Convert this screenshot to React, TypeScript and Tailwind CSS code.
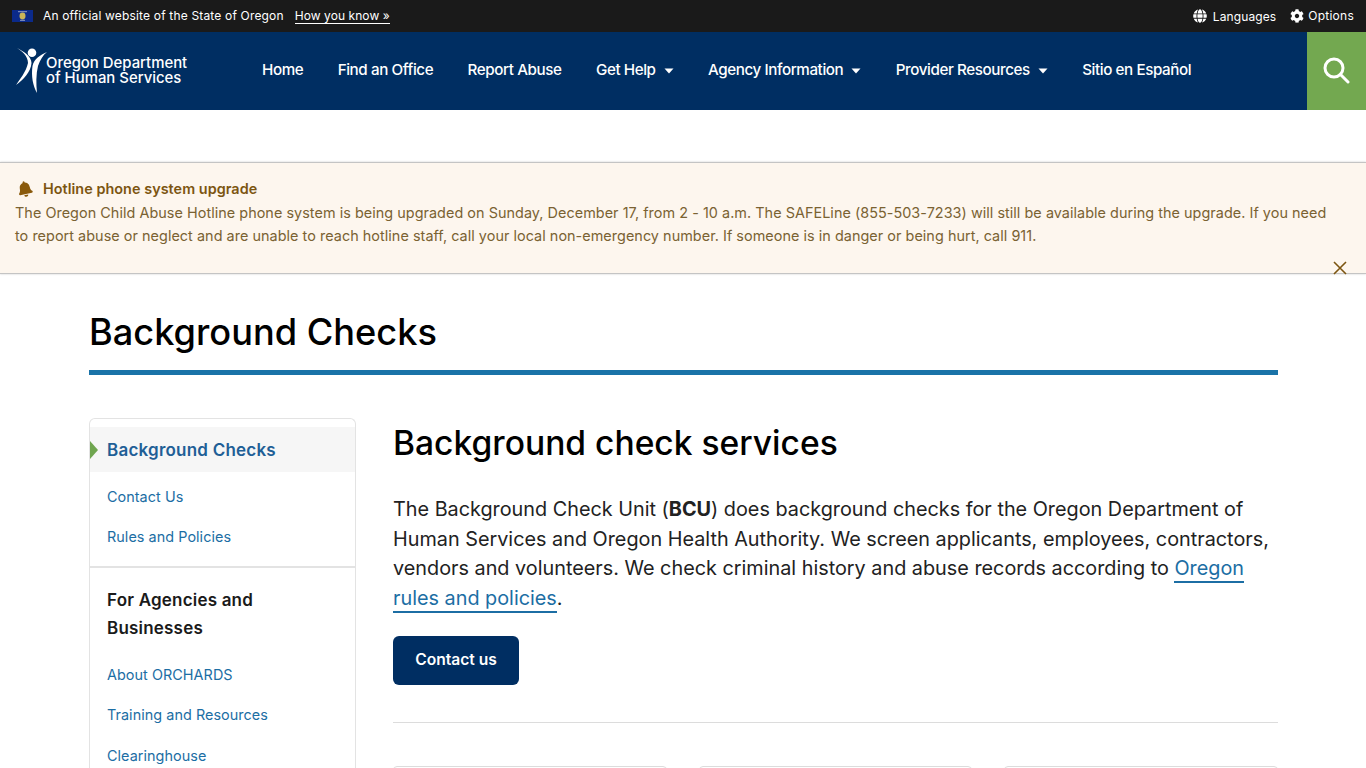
import { FaGlobe, FaCog, FaBell } from "react-icons/fa";

function Flag() {
  return (
    <svg width="21" height="12" viewBox="0 0 21 12" className="block">
      <rect width="21" height="12" fill="#0b2a8a" />
      <ellipse cx="10.5" cy="6" rx="3" ry="3.4" fill="#c9b458" />
      <rect x="6" y="1.2" width="9" height="1" fill="#8f9cc4" />
      <rect x="8" y="9.8" width="5" height="1" fill="#8f9cc4" />
    </svg>
  );
}

function Logo() {
  return (
    <svg width="32" height="50" viewBox="0 0 32 50" className="block overflow-visible">
      <circle cx="17" cy="6.8" r="4.3" fill="#fff" />
      <path d="M2 2 C7 5 13 10 13 17 C11 26 5 33 1 39 C8 34 16 26 16.5 17 C16.5 10 8 5 2 2 Z" fill="#fff" />
      <path d="M32 6 C25 9 19 13 17.5 20 C16 30 18 40 22 47 C21 38 21 28 23 20 C25 14 28 9 32 6 Z" fill="#fff" />
    </svg>
  );
}

function NavItem({ label, caret }: { label: string; caret?: boolean }) {
  return (
    <span className="flex items-center gap-[8px] text-white text-[15.2px] leading-none font-medium tracking-[-0.41px]">
      {label}
      {caret && (
        <svg width="10" height="6" viewBox="0 0 10 6" className="block mt-[2px]">
          <path d="M0.5 0.5 H9.5 L5 5.5 Z" fill="#fff" />
        </svg>
      )}
    </span>
  );
}

function SideLink({ label }: { label: string }) {
  return <div className="text-[14.4px] leading-[24px] tracking-[0.05px] text-[#1c6ea4]">{label}</div>;
}

export default function App() {
  return (
    <div className="h-screen overflow-hidden bg-white font-['Inter',sans-serif] text-black">
      <div className="h-8 bg-[#1a1a1a] flex items-center justify-between pl-3 pr-3 text-white text-[12px]">
        <div className="flex items-center">
          <Flag />
          <span className="ml-[10px] tracking-[0.17px]">An official website of the State of Oregon</span>
          <span className="ml-[11px] border-b border-white leading-[15px] tracking-[0.07px]">How you know »</span>
        </div>
        <div className="flex items-center">
          <FaGlobe className="text-[14px]" />
          <span className="ml-[6px] mt-[1px] tracking-[0.1px]">Languages</span>
          <FaCog className="text-[14px] ml-[14px]" />
          <span className="ml-[4px] tracking-[0.25px]">Options</span>
        </div>
      </div>

      <div className="h-[78px] bg-[#002e62] flex items-center">
        <div className="flex items-center w-[262px] pl-[15px] shrink-0">
          <Logo />
          <div className="-ml-[1px] text-white text-[14.9px] leading-[15.5px] font-medium">
            <div>Oregon Department</div>
            <div>of Human Services</div>
          </div>
        </div>
        <div className="flex-1 flex items-center gap-[34.4px] -mt-[2px]">
          <NavItem label="Home" />
          <NavItem label="Find an Office" />
          <NavItem label="Report Abuse" />
          <NavItem label="Get Help" caret />
          <NavItem label="Agency Information" caret />
          <NavItem label="Provider Resources" caret />
          <NavItem label="Sitio en Español" />
        </div>
        <div className="w-[59px] h-full bg-[#73a850] flex items-center justify-center pr-[2px] pb-[3px]">
          <svg width="28" height="28" viewBox="0 0 28 28" fill="none" stroke="#fff" strokeWidth="3">
            <circle cx="12" cy="12" r="9" />
            <path d="M18.5 18.5 L26 26" strokeLinecap="round" />
          </svg>
        </div>
      </div>

      <div className="h-[52px]" />

      <div className="relative h-[112px] bg-[#fdf6ee] border-y border-[#c4c4c4] shadow-[0_0_2px_rgba(0,0,0,0.2)] pl-[15px] pr-[30px] pt-[16px] text-[#7a6232] text-[14.4px] leading-[23px] tracking-[0.045px]">
        <div className="flex items-center font-semibold text-[#7c5511] leading-[20px]">
          <FaBell className="text-[#8a5a0c] text-[16px] ml-[2px] mr-[10px] -rotate-12" />
          Hotline phone system upgrade
        </div>
        <div className="mt-[1.5px]">
          The Oregon Child Abuse Hotline phone system is being upgraded on Sunday, December 17, from 2 - 10 a.m. The SAFELine (855-503-7233) will still be available during the upgrade. If you need to report abuse or neglect and are unable to reach hotline staff, call your local non-emergency number. If someone is in danger or being hurt, call 911.
        </div>
        <svg width="14" height="14" viewBox="0 0 14 14" className="absolute right-[19px] top-[98px]" stroke="#7c5511" strokeWidth="1.6" fill="none">
          <path d="M1 1 L13 13 M13 1 L1 13" />
        </svg>
      </div>

      <div className="mx-[89px] w-[1189px]">
        <h1 className="pt-[36px] text-[36.2px] leading-[44px] font-medium pb-[16px] border-b-[5px] border-[#1a73a8]">Background Checks</h1>

        <div className="flex mt-[43px]">
          <div className="w-[267px] shrink-0 border border-[#e3e3e3] border-b-0 rounded-t-[6px] pt-[8px]">
            <div className="relative h-[45px] bg-[#f6f6f6] flex items-center pl-[17px] pt-[2px] text-[17px] tracking-[0.22px] font-semibold text-[#1f5f96]">
              <span className="absolute left-0 top-[14px] border-y-[9px] border-y-transparent border-l-[8px] border-l-[#6fa54f]" />
              Background Checks
            </div>
            <div className="pl-[17px] pt-[13px] pb-[17px] flex flex-col gap-[16px]">
              <SideLink label="Contact Us" />
              <SideLink label="Rules and Policies" />
            </div>
            <div className="border-t-2 border-[#e3e3e3] pl-[17px] pt-[18px]">
              <div className="text-[17px] leading-[28px] tracking-[0.2px] font-semibold text-[#1a1a1a]">For Agencies and<br />Businesses</div>
              <div className="pt-[21px] flex flex-col gap-[16.3px]">
                <SideLink label="About ORCHARDS" />
                <SideLink label="Training and Resources" />
                <SideLink label="Clearinghouse" />
              </div>
            </div>
          </div>

          <div className="ml-[37px] flex-1 min-w-0 pt-[1px]">
            <h2 className="text-[33.6px] leading-[48px] font-medium">Background check services</h2>
            <p className="mt-[28px] text-[19.82px] leading-[29.6px] text-[#222]">
              The Background Check Unit (<b className="font-bold">BCU</b>) does background checks for the Oregon Department of Human Services and Oregon Health Authority. We screen applicants, employees, contractors, vendors and volunteers. We check criminal history and abuse records according to{" "}
              <span className="text-[#1c6ea4] border-b-2 border-[#1c6ea4] pb-[1px]">Oregon rules and policies</span>.
            </p>
            <div className="mt-[22.8px] w-[126px] h-[49px] rounded-[6px] bg-[#002e62] text-white flex items-center justify-center text-[15.6px] font-semibold pb-[2px]">Contact us</div>
            <div className="mt-[37px] border-t border-[#dcdcdc]" />
            <div className="mt-[43px] grid grid-cols-3 gap-[32px]">
              <div className="h-[40px] border border-[#dcdcdc] rounded-[4px]" />
              <div className="h-[40px] border border-[#dcdcdc] rounded-[4px]" />
              <div className="h-[40px] border border-[#dcdcdc] rounded-[4px]" />
            </div>
          </div>
        </div>
      </div>
    </div>
  );
}
